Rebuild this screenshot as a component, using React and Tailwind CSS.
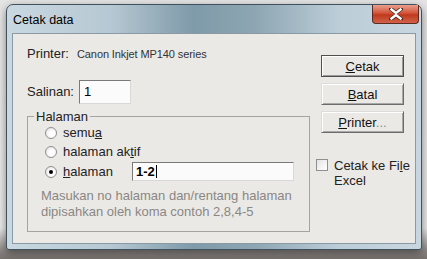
import React from 'react';

function Radio({ checked }) {
    return (
        <span className="relative flex w-[12px] h-[12px] shrink-0 items-center justify-center rounded-full border border-[#8d8f91] bg-[radial-gradient(circle_at_60%_60%,#ffffff_30%,#dcdcdc_100%)]">
            {checked && <span className="w-[4px] h-[4px] rounded-full bg-black"></span>}
        </span>
    );
}

function WinButton({ children, primary }) {
    return (
        <button
            className={
                primary
                    ? 'w-[83px] h-[22px] border border-[#4f4f4f] bg-[#ebe9e6] shadow-[inset_1px_1px_0_#ffffff,inset_-1px_-1px_0_#9a9a9a] text-[13px] leading-none text-[#111]'
                    : 'w-[83px] h-[22px] border border-t-[#dcdcdc] border-l-[#dcdcdc] border-b-[#6c6c6c] border-r-[#6c6c6c] bg-[#ebe9e6] shadow-[inset_1px_1px_0_#ffffff,inset_-1px_-1px_0_#a8a8a8] text-[13px] leading-none text-[#111]'
            }
        >
            {children}
        </button>
    );
}

export default function App() {
    return (
        <div className="w-[427px] h-[259px] overflow-hidden bg-[linear-gradient(to_bottom,#e4e4e4_0%,#e8e8e8_88%,#8a8582_97%,#77716d_100%)] pt-[4px] pl-[6px] font-['Liberation_Sans',Arial,sans-serif]">
            {/* Window frame */}
            <div className="w-[416px] h-[246px] flex flex-col rounded-t-[7px] rounded-b-[3px] border border-[#3f515c] bg-[linear-gradient(to_right,#c9d8e1_0%,#b6c8d3_25%,#7f9aa9_45%,#8ea6b3_60%,#bccdd8_80%,#c8d6df_100%)] shadow-[0_3px_8px_rgba(0,0,0,0.45)]">
                {/* Title bar */}
                <div className="h-[28px] flex justify-between items-start">
                    <span className="pl-[6px] pt-[8px] text-[12.5px] leading-[14px] text-black">Cetak data</span>
                    <div className="w-[47px] h-[19px] mr-[2px] flex items-center justify-center rounded-b-[4px] border border-t-0 border-[#5b2a20] bg-[linear-gradient(to_bottom,#e8a08e_0%,#d2553a_45%,#c0391c_55%,#d0634a_100%)]">
                        <svg width="14" height="12" viewBox="0 0 14 12">
                            <path d="M2 1 L7 5 L12 1 M2 11 L7 7 L12 11" fill="none" stroke="#4a2a22" strokeWidth="4" strokeLinecap="round" />
                            <path d="M2.5 1.5 L7 5 L11.5 1.5 M2.5 10.5 L7 7 L11.5 10.5" fill="none" stroke="#ffffff" strokeWidth="2.4" strokeLinecap="square" />
                        </svg>
                    </div>
                </div>

                {/* Client area */}
                <div className="mx-[5px] h-[211px] flex bg-[#ebe9e6] border border-[#8a9aa4]">
                    {/* Left column */}
                    <div className="w-[297px] pl-[14px] flex flex-col">
                        <div className="mt-[12px] h-[16px] flex items-center">
                            <span className="w-[50px] text-[13px] text-[#222]">Printer:</span>
                            <span className="text-[11px] text-[#333] tracking-[-0.1px]">Canon Inkjet MP140 series</span>
                        </div>

                        <div className="mt-[18px] h-[24px] flex items-center">
                            <span className="w-[52px] text-[13px] text-[#222]">Salinan:</span>
                            <div className="w-[52px] h-[24px] flex items-center pl-[4px] border border-t-[#7a7a7a] border-l-[#7a7a7a] border-b-[#d8d8d8] border-r-[#d8d8d8] bg-[#fbfbfb] text-[13px] text-black">1</div>
                        </div>

                        <fieldset className="mt-[5px] w-[283px] h-[123px] border border-[#a7a39e] flex flex-col">
                            <legend className="ml-[6px] px-[2px] text-[13px] leading-[15px] text-[#222]">Halaman</legend>

                            <div className="pl-[17px] h-[18px] flex items-center gap-[6px] text-[13px] text-[#222]">
                                <Radio />
                                <span>semu<u>a</u></span>
                            </div>
                            <div className="mt-[1px] pl-[17px] h-[18px] flex items-center gap-[6px] text-[13px] text-[#222]">
                                <Radio />
                                <span>halaman ak<u>t</u>if</span>
                            </div>
                            <div className="mt-[1px] pl-[17px] h-[19px] flex items-center gap-[6px] text-[13px] text-[#222]">
                                <Radio checked />
                                <span className="w-[63px]"><u>h</u>alaman</span>
                                <div className="w-[162px] h-[19px] flex items-center pl-[3px] border border-t-[#7a7a7a] border-l-[#7a7a7a] border-b-[#d8d8d8] border-r-[#d8d8d8] bg-[#fbfbfb] font-bold text-black">
                                    1-2<span className="ml-[1px] w-[1px] h-[13px] bg-black"></span>
                                </div>
                            </div>

                            <p className="mt-[7px] pl-[13px] text-[13px] leading-[16px] text-[#8a8784]">
                                Masukan no halaman dan/rentang halaman<br />
                                dipisahkan oleh koma contoh 2,8,4-5
                            </p>
                        </fieldset>
                    </div>

                    {/* Right column */}
                    <div className="ml-[6px] flex flex-col">
                        <div className="ml-[5px] mt-[21px] flex flex-col gap-[6px]">
                            <WinButton primary><u>C</u>etak</WinButton>
                            <WinButton><u>B</u>atal</WinButton>
                            <WinButton><u>P</u>rinter<span className="text-[#8d8d8d]">...</span></WinButton>
                        </div>

                        <div className="mt-[25px] flex items-start gap-[6px]">
                            <span className="mt-[1px] w-[12px] h-[12px] shrink-0 border border-[#8d8f91] bg-[linear-gradient(135deg,#e4e4e4,#ffffff)]"></span>
                            <span className="text-[13px] leading-[15px] text-[#222]">
                                Cetak ke Fi<u>l</u>e<br />Excel
                            </span>
                        </div>
                    </div>
                </div>
            </div>
        </div>
    );
}
